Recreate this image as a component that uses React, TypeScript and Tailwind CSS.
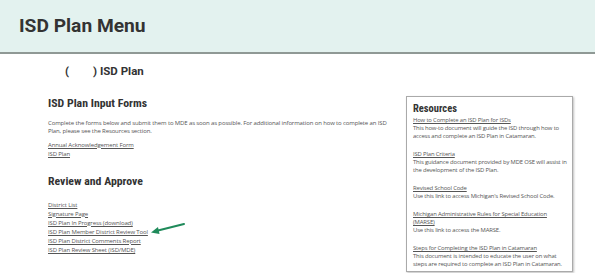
import React from "react"

const body = "font-['Open_Sans',sans-serif] text-[6px] tracking-[-0.13px] leading-[8.4px] text-[#555]"
const heading = "font-['Roboto',sans-serif] [font-stretch:80%] font-bold text-[#333]"
const link = "underline text-[#555] block"

const resources = [
  {
    title: "How to Complete an ISD Plan for ISDs",
    text: "This how-to document will guide the ISD through how to access and complete an ISD Plan in Catamaran.",
  },
  {
    title: "ISD Plan Criteria",
    text: "This guidance document provided by MDE OSE will assist in the development of the ISD Plan.",
  },
  {
    title: "Revised School Code",
    text: "Use this link to access Michigan's Revised School Code.",
  },
  {
    title: "Michigan Administrative Rules for Special Education (MARSE)",
    text: "Use this link to access the MARSE.",
  },
  {
    title: "Steps for Completing the ISD Plan in Catamaran",
    text: "This document is intended to educate the user on what steps are required to complete an ISD Plan in Catamaran.",
  },
]

const reviewLinks = [
  "District List",
  "Signature Page",
  "ISD Plan In Progress (download)",
  "ISD Plan Member District Review Tool",
  "ISD Plan District Comments Report",
  "ISD Plan Review Sheet (ISD/MDE)",
]

export default function App() {
  return (
    <div className="w-[595px] h-[273px] bg-white overflow-hidden">
      <div className="h-[54px] bg-[#e3f2ef] border-b-2 border-[#8f9995] flex items-center pl-[19px]">
        <h1 className="font-['Roboto',sans-serif] font-bold text-[19.2px] text-[#333]">ISD Plan Menu</h1>
      </div>

      <div className="pl-[65px] pt-[9px] h-[30px] font-['Roboto',sans-serif] font-bold text-[11.5px] text-[#333]">
        (<span className="inline-block w-[24px]" />) ISD Plan
      </div>

      <div className="flex">
        <div className="pl-[48px] w-[406px] pt-[11px]">
          <h2 className={`${heading} text-[11.8px] leading-[16px]`}>ISD Plan Input Forms</h2>
          <p className={`${body} mt-[8px] w-[340px]`}>
            Complete the forms below and submit them to MDE as soon as possible. For additional information on how to complete an ISD Plan, please see the Resources section.
          </p>
          <div className={`${body} mt-[5px] leading-[9px]`}>
            <a className={link}>Annual Acknowledgement Form</a>
            <a className={link}>ISD Plan</a>
          </div>

          <h2 className={`${heading} text-[11.8px] leading-[16px] mt-[14px]`}>Review and Approve</h2>
          <div className={`${body} mt-[12px] leading-[9px]`}>
            {reviewLinks.map((l, i) => (
              <div key={l} className="relative">
                <a className={link}>{l}</a>
                {i === 3 && (
                  <svg className="absolute left-[100px] top-[-6px]" width="40" height="16" viewBox="0 0 40 16">
                    <line x1="36" y1="2" x2="8" y2="9" stroke="#1f8a5a" strokeWidth="2" strokeLinecap="round" />
                    <polygon points="3,10.5 10,5 11.5,12" fill="#1f8a5a" />
                  </svg>
                )}
              </div>
            ))}
          </div>
        </div>

        <div className="mt-[12px] w-[167px] h-[176px] border border-[#aaa] shadow-[1px_1px_2px_rgba(0,0,0,0.25)] pl-[6px] pr-[3px] pt-[4px]">
          <h3 className={`${heading} text-[10.5px] leading-[15px]`}>Resources</h3>
          <div className="font-['Open_Sans',sans-serif] text-[5.9px] tracking-[-0.15px] text-[#555] leading-[8px] flex flex-col gap-[10px]">
            {resources.map((r) => (
              <div key={r.title}>
                <a className={link}>{r.title}</a>
                <div>{r.text}</div>
              </div>
            ))}
          </div>
        </div>
      </div>
    </div>
  )
}
